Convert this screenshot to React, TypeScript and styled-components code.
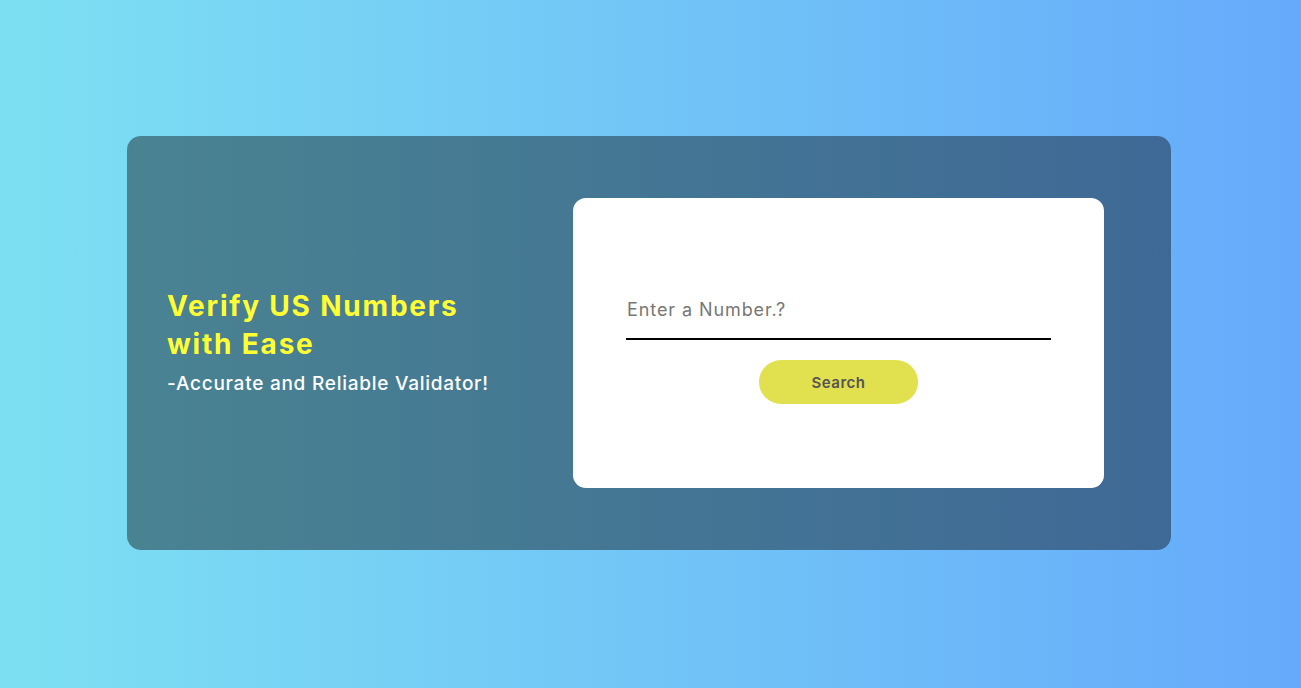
import React from "react";
import styled, { createGlobalStyle } from "styled-components";

const Global = createGlobalStyle`
  * { box-sizing: border-box; }
  html, body { margin: 0; padding: 0; }
  body { font-family: "Inter", "Liberation Sans", sans-serif; }
`;

const Page = styled.div`
  width: 100vw;
  height: 100vh;
  background: linear-gradient(90deg, #7de0f2 0%, #66aafb 100%);
  display: flex;
  align-items: center;
  justify-content: center;
  padding-right: 3px;
  padding-bottom: 2px;
`;

const Card = styled.div`
  width: 1044px;
  height: 414px;
  border-radius: 14px;
  background: rgba(0, 0, 0, 0.4);
  display: flex;
  align-items: center;
  justify-content: space-between;
  padding: 0 67px 0 40px;
`;

const Intro = styled.div`
  display: flex;
  flex-direction: column;
  margin-bottom: 2px;
`;

const Title = styled.h1`
  margin: 0;
  font-size: 28px;
  line-height: 38px;
  font-weight: 700;
  color: #ffff33;
  width: 330px;
  letter-spacing: 1.8px;
`;

const Subtitle = styled.p`
  margin: 8px 0 0;
  font-size: 19px;
  line-height: 26px;
  font-weight: 500;
  letter-spacing: 0.75px;
  color: #ffffff;
`;

const FormBox = styled.div`
  width: 531px;
  height: 290px;
  background: #ffffff;
  border-radius: 13px;
  display: flex;
  flex-direction: column;
  align-items: center;
  justify-content: center;
`;

const NumberInput = styled.input`
  width: 80%;
  height: 58px;
  border: none;
  border-bottom: 2px solid #000;
  outline: none;
  font-family: inherit;
  font-size: 18px;
  letter-spacing: 0.9px;
  color: #333;
  padding: 0 1px 1px;
  background: transparent;
  &::placeholder { color: #777777; }
`;

const SearchButton = styled.button`
  margin-top: 20px;
  width: 159px;
  height: 44px;
  border: none;
  border-radius: 22px;
  background: #e1e04e;
  color: #555555;
  font-family: inherit;
  font-size: 15px;
  font-weight: 600;
  letter-spacing: 0.5px;
  cursor: pointer;
`;

export default function App() {
  return (
    <>
      <Global />
      <Page>
        <Card>
          <Intro>
            <Title>Verify US Numbers with Ease</Title>
            <Subtitle>-Accurate and Reliable Validator!</Subtitle>
          </Intro>
          <FormBox>
            <NumberInput placeholder="Enter a Number.?" />
            <SearchButton>Search</SearchButton>
          </FormBox>
        </Card>
      </Page>
    </>
  );
}
